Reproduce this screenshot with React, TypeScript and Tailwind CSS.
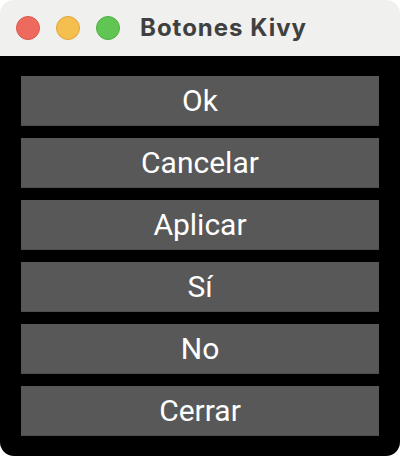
import React from "react";

const labels = ["Ok", "Cancelar", "Aplicar", "Sí", "No", "Cerrar"];

export default function App() {
  return (
    <div className="w-[400px] h-[456px] bg-white">
      <div className="w-full h-full rounded-[14px] overflow-hidden flex flex-col">
        <div className="h-[56px] bg-[#f0f0ef] flex items-center pl-[16px] shrink-0">
          <div className="flex gap-[16px]">
            <span className="block w-[24px] h-[24px] rounded-full bg-[#ee6a5f] border border-[#d9574c]" />
            <span className="block w-[24px] h-[24px] rounded-full bg-[#f5bf4f] border border-[#dea73a]" />
            <span className="block w-[24px] h-[24px] rounded-full bg-[#61c554] border border-[#4fae43]" />
          </div>
          <span
            className="ml-[20px] text-[24px] font-bold text-[#404040] leading-none tracking-[1px]"
            style={{ fontFamily: "Inter, 'Open Sans', sans-serif" }}
          >
            Botones Kivy
          </span>
        </div>
        <div className="flex-1 bg-black px-[21px] py-[20px] flex flex-col gap-[12px]">
          {labels.map((l) => (
            <div
              key={l}
              className="h-[50px] bg-[#585858] border-b border-[#4e4e4e] flex items-center justify-center text-white text-[30px] leading-none"
              style={{ fontFamily: "Roboto, sans-serif" }}
            >
              {l}
            </div>
          ))}
        </div>
      </div>
    </div>
  );
}
